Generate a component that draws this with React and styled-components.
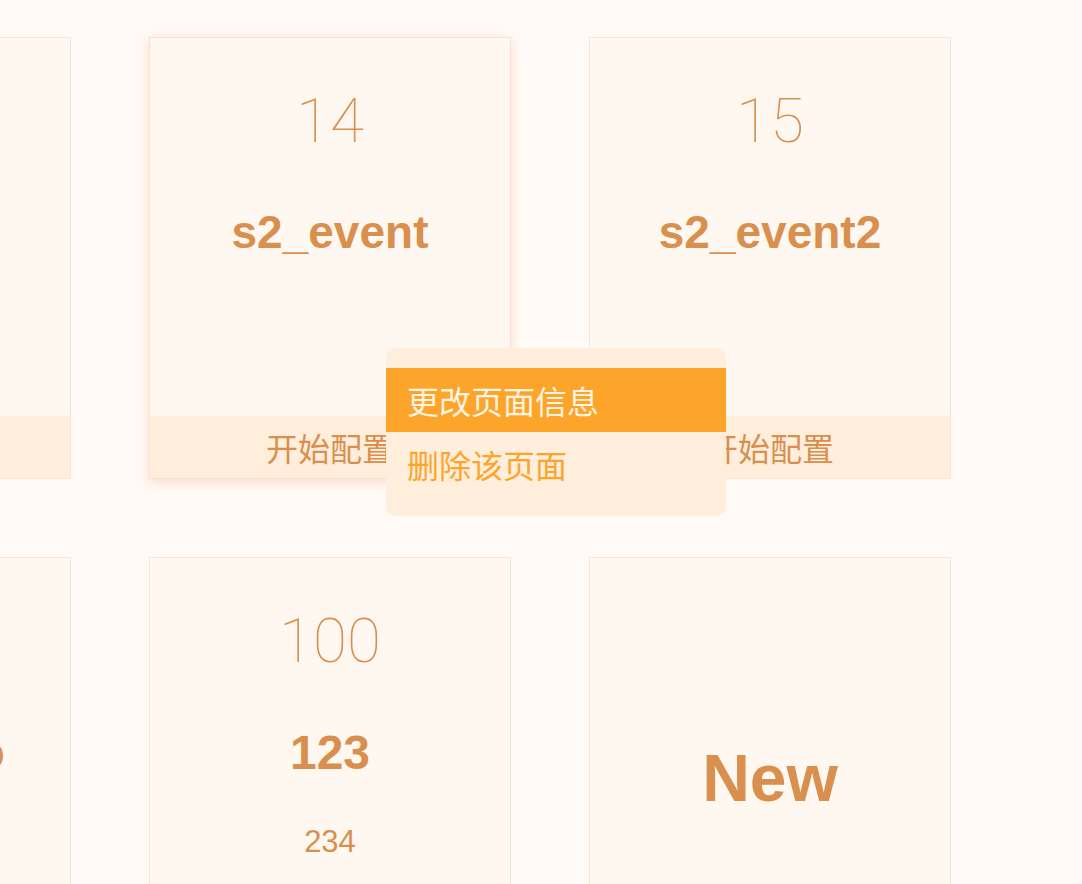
import React from "react";
import styled, { createGlobalStyle, css } from "styled-components";

const Global = createGlobalStyle`
  html, body {
    margin: 0;
    padding: 0;
    background: #fffaf5;
    overflow: hidden;
  }
  body {
    font-family: "Liberation Sans", "Noto Sans CJK SC", sans-serif;
    color: #d98f4e;
  }
`;

const Page = styled.div`
  width: 1082px;
  height: 884px;
  overflow: hidden;
  padding-top: 37px;
  box-sizing: border-box;
`;

const Grid = styled.div`
  display: grid;
  grid-template-columns: repeat(3, 362px);
  grid-auto-rows: 442px;
  column-gap: 78px;
  row-gap: 78px;
  margin-left: -291px;
`;

const Card = styled.div`
  position: relative;
  display: flex;
  flex-direction: column;
  box-sizing: border-box;
  background: #fff8f1;
  border: 1px solid #fde2d4;
  ${(p) =>
    p.$active &&
    css`
      z-index: 2;
      border-color: #fde0cf;
      box-shadow: 0 3px 10px rgba(255, 140, 100, 0.28);
    `}
`;

const Body = styled.div`
  flex: 1;
  display: flex;
  flex-direction: column;
  align-items: center;
  justify-content: ${(p) => (p.$center ? "center" : "flex-start")};
  padding-top: ${(p) => (p.$center ? "0" : "52px")};
`;

const Num = styled.div`
  font-family: "Roboto", "Liberation Sans", sans-serif;
  font-weight: 100;
  font-size: 62px;
  line-height: 62px;
  color: #d98f4e;
`;

const Title = styled.div`
  font-family: "Liberation Sans", "Noto Sans CJK SC", sans-serif;
  font-weight: 700;
  font-size: ${(p) => p.$size || 46}px;
  line-height: ${(p) => p.$size || 46}px;
  margin-top: ${(p) => (p.$center ? 0 : 57)}px;
  color: #d98f4e;
  white-space: nowrap;
`;

const Desc = styled.div`
  font-family: "Liberation Sans", sans-serif;
  font-size: 31px;
  line-height: 31px;
  margin-top: 49px;
  color: #d98f4e;
`;

const Footer = styled.div`
  height: 62px;
  flex-shrink: 0;
  display: flex;
  align-items: center;
  justify-content: center;
  background: #ffeedc;
  font-family: "Noto Sans CJK SC", sans-serif;
  font-size: 32px;
  color: #d98f4e;
`;

const Menu = styled.div`
  position: absolute;
  left: 236px;
  top: 310px;
  width: 340px;
  padding: 20px 0;
  background: #ffeedc;
  border-radius: 9px;
  z-index: 5;
`;

const MenuItem = styled.div`
  height: 64px;
  display: flex;
  align-items: center;
  padding-left: 21px;
  font-family: "Noto Sans CJK SC", sans-serif;
  font-size: 32px;
  color: ${(p) => (p.$hl ? "#fff4e4" : "#fda42a")};
  background: ${(p) => (p.$hl ? "#fda42a" : "transparent")};
`;

const cards = [
  { num: "12", title: "s2_home", footer: true },
  { num: "14", title: "s2_event", footer: true, active: true, menu: true },
  { num: "15", title: "s2_event2", footer: true },
  { num: "99", title: "s2_promo", size: 48, desc: "" },
  { num: "100", title: "123", size: 48, desc: "234" },
  { isNew: true },
];

export default function App() {
  return (
    <>
      <Global />
      <Page>
        <Grid>
          {cards.map((c, i) => (
            <Card key={i} $active={c.active}>
              {c.isNew ? (
                <Body $center>
                  <Title $center $size={66}>New</Title>
                </Body>
              ) : (
                <Body>
                  <Num>{c.num}</Num>
                  <Title $size={c.size}>{c.title}</Title>
                  {c.desc ? <Desc>{c.desc}</Desc> : null}
                </Body>
              )}
              {c.footer && <Footer>开始配置</Footer>}
              {c.menu && (
                <Menu>
                  <MenuItem $hl>更改页面信息</MenuItem>
                  <MenuItem>删除该页面</MenuItem>
                </Menu>
              )}
            </Card>
          ))}
        </Grid>
      </Page>
    </>
  );
}
